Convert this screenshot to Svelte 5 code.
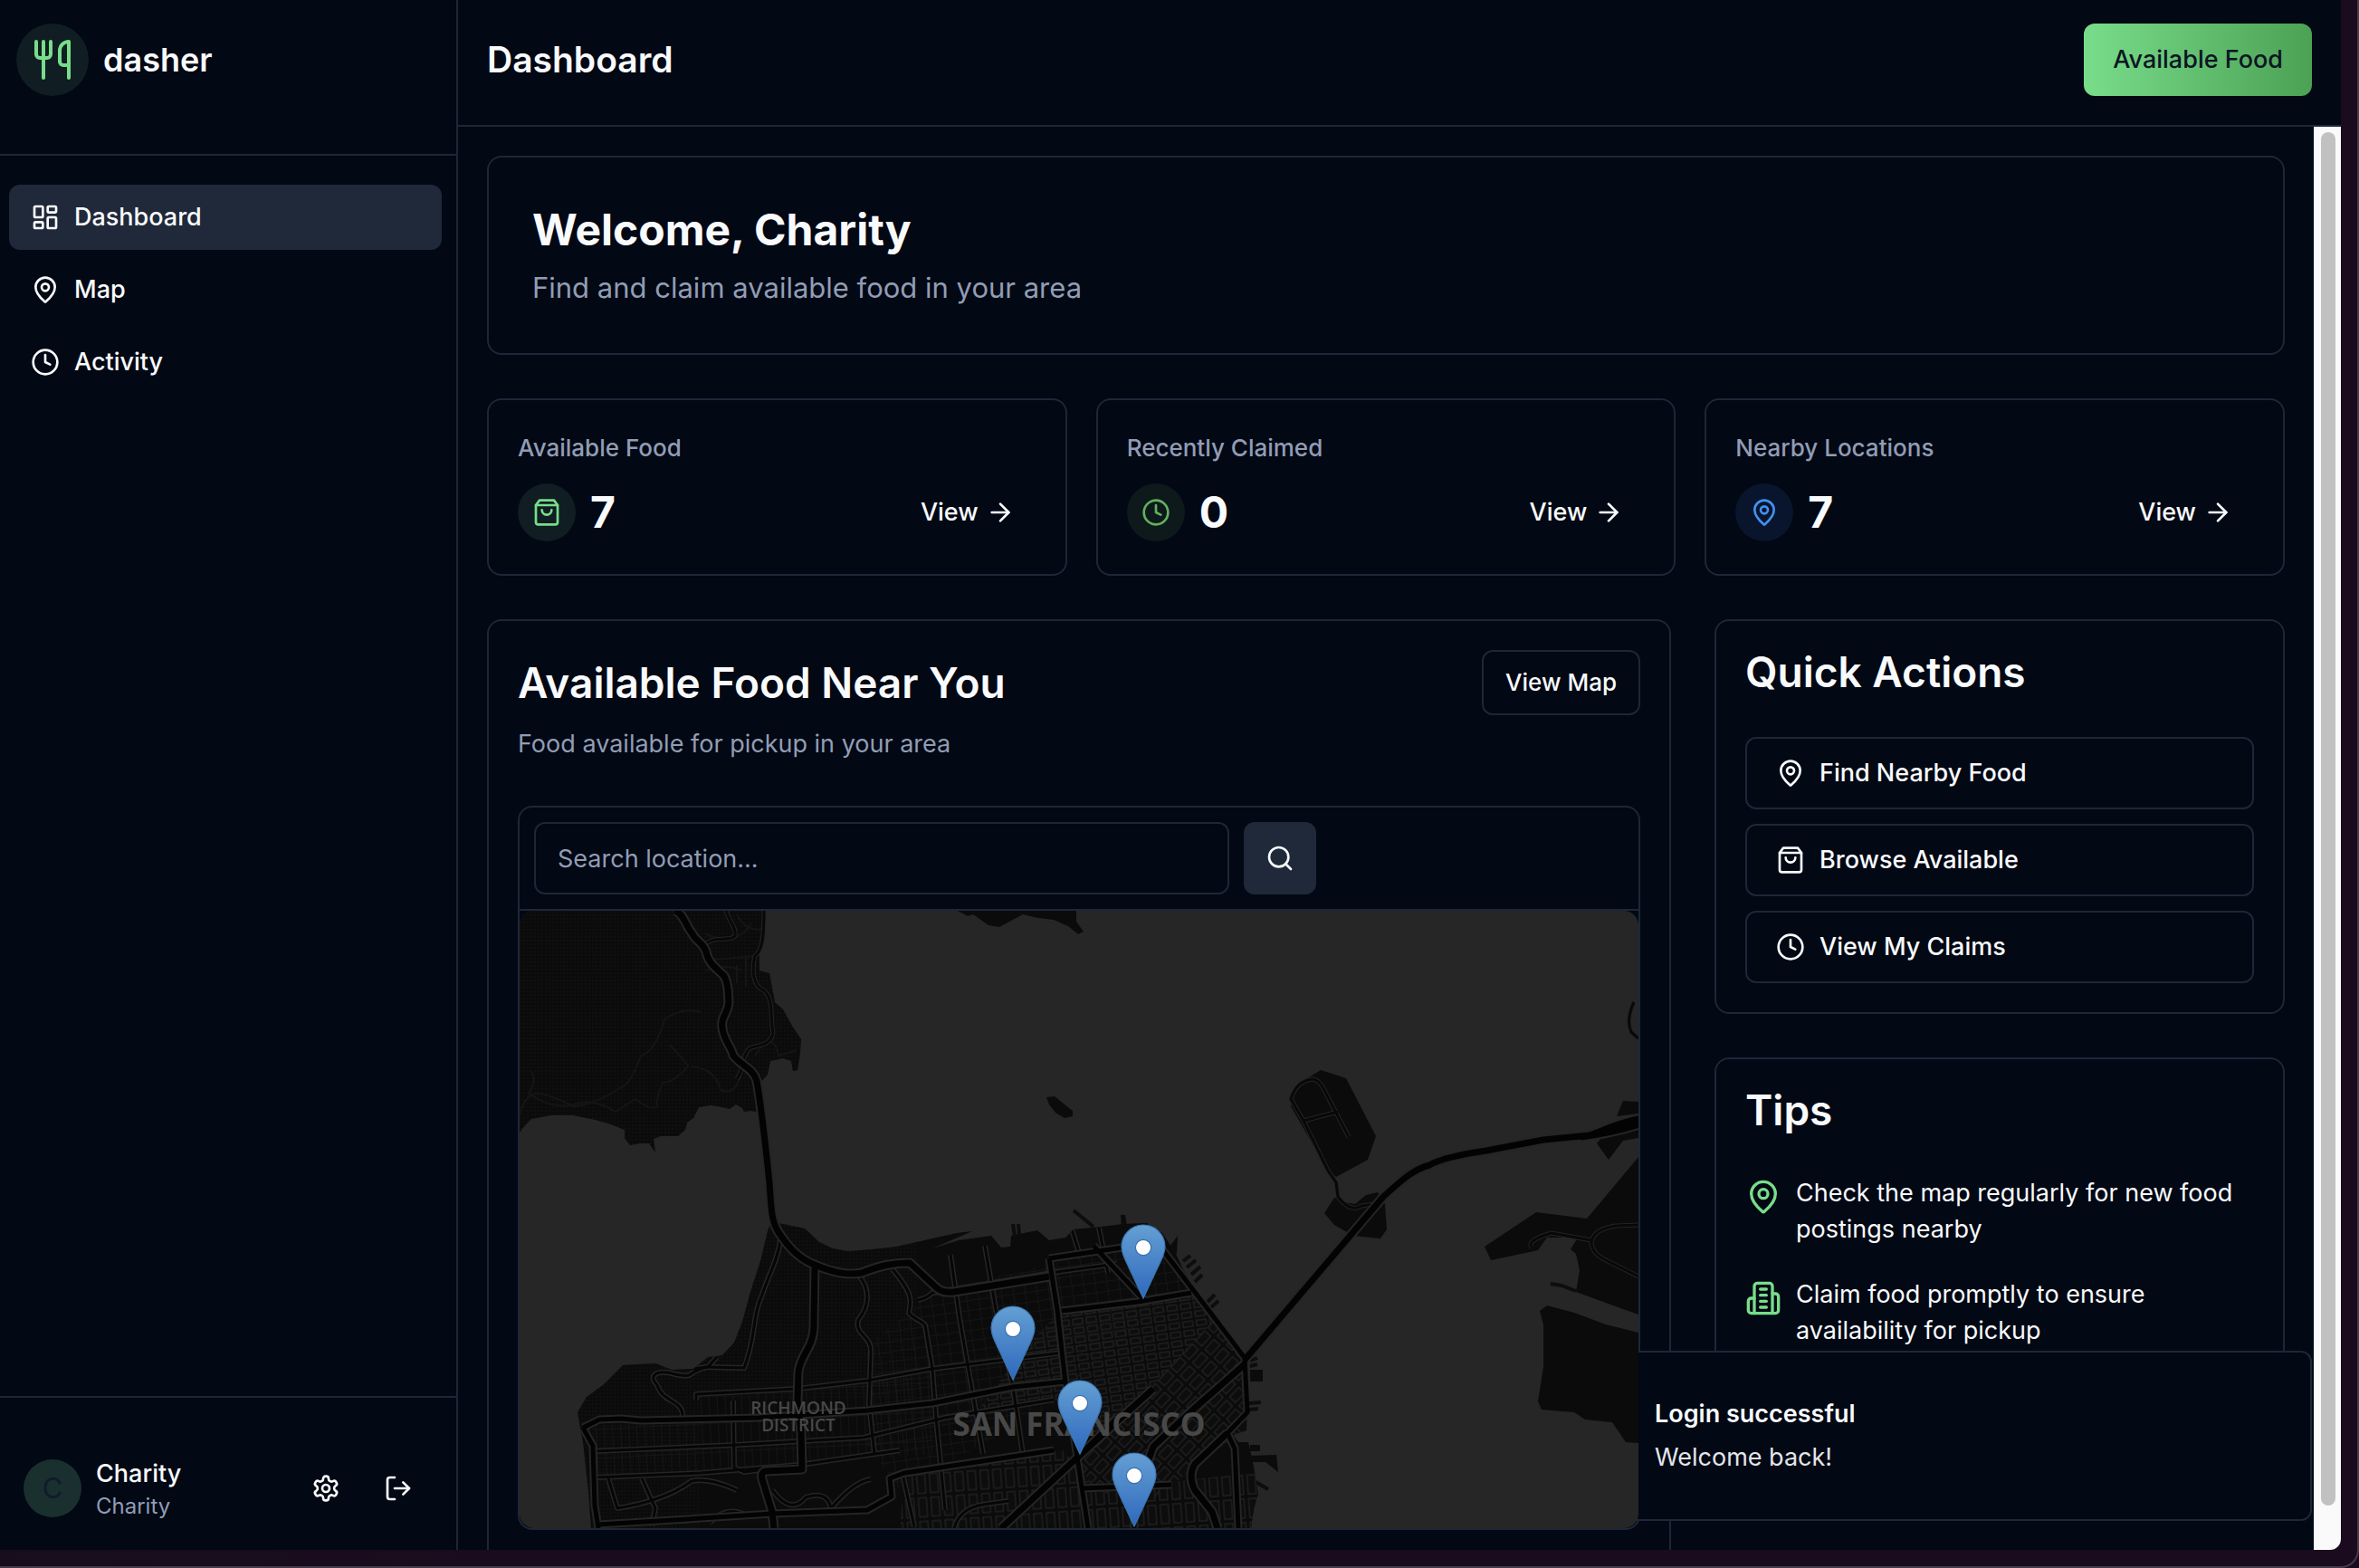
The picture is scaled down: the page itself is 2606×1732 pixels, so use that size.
<script>
  const icons = {
    utensils: ['M3 2v7c0 1.1.9 2 2 2h4a2 2 0 0 0 2-2V2', 'M7 2v20', 'M21 15V2a5 5 0 0 0-5 5v6c0 1.1.9 2 2 2h3Zm0 0v7'],
    dashboard: [
      'M4 3h5a1 1 0 0 1 1 1v7a1 1 0 0 1-1 1H4a1 1 0 0 1-1-1V4a1 1 0 0 1 1-1Z',
      'M15 3h5a1 1 0 0 1 1 1v3a1 1 0 0 1-1 1h-5a1 1 0 0 1-1-1V4a1 1 0 0 1 1-1Z',
      'M15 12h5a1 1 0 0 1 1 1v7a1 1 0 0 1-1 1h-5a1 1 0 0 1-1-1v-7a1 1 0 0 1 1-1Z',
      'M4 16h5a1 1 0 0 1 1 1v3a1 1 0 0 1-1 1H4a1 1 0 0 1-1-1v-3a1 1 0 0 1 1-1Z'
    ],
    pin: [
      'M20 10c0 4.993-5.539 10.193-7.399 11.799a1 1 0 0 1-1.202 0C9.539 20.193 4 14.993 4 10a8 8 0 0 1 16 0',
      'M9 10a3 3 0 1 0 6 0a3 3 0 1 0-6 0'
    ],
    clock: ['M2 12a10 10 0 1 0 20 0a10 10 0 1 0-20 0', 'M12 6v6l4 2'],
    bag: ['M6 2 3 6v14a2 2 0 0 0 2 2h14a2 2 0 0 0 2-2V6l-3-4Z', 'M3 6h18', 'M16 10a4 4 0 0 1-8 0'],
    arrow: ['M5 12h14', 'm12 5 7 7-7 7'],
    search: ['M3 11a8 8 0 1 0 16 0a8 8 0 1 0-16 0', 'm21 21-4.3-4.3'],
    building: [
      'M6 22V4a2 2 0 0 1 2-2h8a2 2 0 0 1 2 2v18Z',
      'M6 12H4a2 2 0 0 0-2 2v6a2 2 0 0 0 2 2h2',
      'M18 9h2a2 2 0 0 1 2 2v9a2 2 0 0 1-2 2h-2',
      'M10 6h4', 'M10 10h4', 'M10 14h4', 'M10 18h4'
    ],
    settings: [
      'M12.22 2h-.44a2 2 0 0 0-2 2v.18a2 2 0 0 1-1 1.73l-.43.25a2 2 0 0 1-2 0l-.15-.08a2 2 0 0 0-2.73.73l-.22.38a2 2 0 0 0 .73 2.73l.15.1a2 2 0 0 1 1 1.72v.51a2 2 0 0 1-1 1.74l-.15.09a2 2 0 0 0-.73 2.73l.22.38a2 2 0 0 0 2.73.73l.15-.08a2 2 0 0 1 2 0l.43.25a2 2 0 0 1 1 1.73V20a2 2 0 0 0 2 2h.44a2 2 0 0 0 2-2v-.18a2 2 0 0 1 1-1.73l.43-.25a2 2 0 0 1 2 0l.15.08a2 2 0 0 0 2.73-.73l.22-.39a2 2 0 0 0-.73-2.73l-.15-.08a2 2 0 0 1-1-1.74v-.5a2 2 0 0 1 1-1.74l.15-.09a2 2 0 0 0 .73-2.73l-.22-.38a2 2 0 0 0-2.73-.73l-.15.08a2 2 0 0 1-2 0l-.43-.25a2 2 0 0 1-1-1.73V4a2 2 0 0 0-2-2z',
      'M9 12a3 3 0 1 0 6 0a3 3 0 1 0-6 0'
    ],
    logout: ['M9 21H5a2 2 0 0 1-2-2V5a2 2 0 0 1 2-2h4', 'm16 17 5-5-5-5', 'M21 12H9']
  };

  const nav = [
    { label: 'Dashboard', icon: 'dashboard', active: true },
    { label: 'Map', icon: 'pin', active: false },
    { label: 'Activity', icon: 'clock', active: false }
  ];

  const stats = [
    { label: 'Available Food', value: 7, icon: 'bag', tone: 'mint' },
    { label: 'Recently Claimed', value: 0, icon: 'clock', tone: 'leaf' },
    { label: 'Nearby Locations', value: 7, icon: 'pin', tone: 'blue' }
  ];

  const actions = [
    { label: 'Find Nearby Food', icon: 'pin' },
    { label: 'Browse Available', icon: 'bag' },
    { label: 'View My Claims', icon: 'clock' }
  ];

  const tips = [
    { text: 'Check the map regularly for new food postings nearby', icon: 'pin' },
    { text: 'Claim food promptly to ensure availability for pickup', icon: 'building' }
  ];

  const city =
    'M79 682 76 641 70 587 67 571 64 554 74 537 92 524 105 511 114 502 130 501 150 500 168 507 192 506 208 493 224 491 237 477 246 454 255 421 266 387 274 354 278 344 291 346 315 351 331 366 346 373 362 376 390 374 416 371 456 362 483 356 500 354 456 373 485 364 521 359 532 372 542 371 543 359 572 353 585 364 603 361 612 352 643 349 666 346 690 345 710 356 725 379 740 411 761 437 786 471 801 491 804 524 803 574 788 579 794 587 805 587 811 614 816 644 811 661 808 682Z';

  const land = [
    'M0 0H272L270 30 265 47 265 66 276 69 282 101 291 109 301 127 311 142 310 157 307 176 302 177 300 166 291 163 277 166 274 181 262 194 262 222 255 221 248 222 246 218 239 214 232 219 219 216 211 215 198 217 192 229 185 234 183 242 175 249 156 249 148 252 150 267 143 257 133 257 122 259 116 251 116 242 101 236 84 231 59 226 34 226 13 230 6 237 0 245Z',
    'M484 0 495 6 501 4 518 16 530 18 543 11 556 4 573 8 590 10 606 17 617 26 623 23 615 12 615 0Z',
    'M582 206 591 205 602 214 611 221 611 227 602 229 592 223 585 214Z',
    city,
    'M885 176 913 185 946 249 937 275 902 294 893 287 852 216 860 191Z',
    'M900 317 889 334 900 347 921 359 951 362 958 352 956 324 948 311 935 314 923 324 912 322Z',
    'M1219 210 1236 211V224L1212 227Z',
    'M1190 257 1203 275 1219 254 1236 251V232L1200 245Z',
    'M1236 272 1179 340 1123 333 1066 371 1073 386 1125 375 1135 361 1169 361 1161 374 1167 379 1171 397 1167 421 1236 446Z',
    'M1135 436 1165 444 1200 457 1236 466V588L1222 587 1207 565 1177 562 1165 554 1129 551 1125 542 1131 504 1131 457 1127 442Z',
    'M807 507h14v13h-14Z',
    'M807 590h11v7h-11Z',
    'M807 602 836 601 838 620 824 609 807 609Z',
    'M727 359 726 379 716 374Z',
    'M664 336l5 0 2 14h-6Z'
  ];

  const piers = [
    'M612 331 634 349', 'M692 345v8', 'M545 346l2 14', 'M551 346l1 12', 'M733 387l8-6', 'M737 394l10-8', 'M742 402l10-9',
    'M746 410l8-8', 'M760 432l8-8', 'M764 438l8-7', 'M807 497l8-3', 'M807 503l8-2', 'M806 544l13-1', 'M806 551l10-1',
    'M813 631l14 8', 'M1139 412l12 2 16 6'
  ];

  const highways = [
    'M172 0C182 4 184 18 190 24C196 36 202 34 206 45C208 58 218 64 226 72C232 84 230 94 231 101C230 115 222 116 224 130C226 144 234 150 236 160C246 172 258 174 262 188C266 210 272 262 276 300C278 330 278 345 288 358C300 376 312 386 326 391C352 402 366 402 378 400C398 392 412 389 431 389L458 414Q466 423 480 421L585 404',
    'M326 391 325 460C325 482 309 492 308 510L307 541 311 576 312 617 272 619Q266 620 268 628L279 664 281 682',
    'M801 496 954 316C972 300 986 286 1005 281Q1020 272 1068 265L1131 253 1182 248C1198 243 1212 234 1240 229',
    'M1172 250Q1206 246 1240 235',
    'M801 501 744 551 700 592 690 620',
    'M782 577 746 611Q738 624 746 640L765 664 771 682',
    'M532 682 616 604 700 528'
  ];

  const avenues = [
    'M70 571 88 562 112 561 134 563 264 560 384 552 456 544 545 526 603 520',
    'M70 571 81 591 83 657 87 682',
    'M87 678 170 673 279 666 384 662 411 647 409 627 425 621 590 596',
    'M585 384 594 441 603 521 616 604 628 682',
    'M585 384 666 372 710 374 748 424 786 474 801 494 804 554 782 577 790 594 794 682',
    'M599 442 683 432 742 422',
    'M634 370 690 430', 'M679 682V630', 'M620 638 720 634', 'M616 604 660 560'
  ];

  const streets = [
    'M190 506 208 504 218 493', 'M236 541 237 615 248 620 264 618', 'M195 540V534L307 528 384 519 456 506 600 488',
    'M82 597 240 590 380 582 470 560 590 540', 'M83 626 200 621 310 612 420 596',
    'M206 504C180 512 196 516 172 512C150 506 142 514 152 524C158 544 182 540 180 560', 'M206 504 248 505C262 470 256 450 268 424C276 400 286 384 288 364',
    'M374 402C390 420 384 440 374 452C370 470 390 468 388 490L386 544 392 600', 'M412 396C432 420 434 428 430 444C436 452 444 452 448 458L456 506 460 560 470 662',
    'M476 380 486 450 500 530 512 600', 'M514 370 526 440 545 526 556 600', 'M440 430Q450 428 456 422L600 398 660 390',
    'M98 627 108 660Q160 652 190 630 210 626 240 640', 'M135 627 150 660 146 680', 'M210 676Q230 656 250 668',
    'M279 640Q300 668 316 648 340 640 344 660', 'M344 660Q370 630 388 628', 'M480 682Q486 660 512 656L540 652',
    'M423 622 436 680', 'M610 352 620 384', 'M640 350 650 400'
  ];

  const trails = [
    'M200 44C210 24 230 36 238 28 240 20 232 12 228 0', 'M270 0C270 30 268 44 260 50 256 66 258 84 270 88 282 100 276 116 280 134 278 150 262 148 254 152 244 162 250 172 240 186',
    'M893 287 866 232 852 208Q858 188 876 186 884 186 892 204L916 250', 'M866 232 904 222', 'M893 287 902 300 904 316Q918 334 930 326L944 324',
    'M1118 372Q1112 364 1140 356L1184 364', 'M1236 347 1211 348Q1186 352 1184 366 1184 378 1200 386L1236 404',
    'M1231 101Q1222 120 1228 134L1236 141'
  ];

  const contours = [
    'M0 226Q6 200 24 202 40 206 60 216 84 214 110 196 122 194 134 160 150 156 160 120 180 106 200 112 222 126',
    'M166 148Q186 170 186 172 170 190 158 190 150 210 152 216 146 222 128 208 118 214 106 222 80 206 60 214 36 220 10 202 20 186 12 176',
    'M190 172Q216 174 222 198 240 206 246 174',
    'M206 66Q228 58 246 66', 'M214 54 262 50', 'M206 26Q240 40 256 14', 'M240 80V60', 'M250 84V50', 'M260 160Q280 130 286 160 300 156 306 154', 'M240 4Q250 24 268 20'
  ];

  const pins = [
    { x: 689, y: 428 },
    { x: 545, y: 518 },
    { x: 619, y: 600 },
    { x: 679, y: 680 }
  ];
</script>

{#snippet icon(name, size = 'md')}
  <svg class="icon {size}" viewBox="0 0 24 24" aria-hidden="true">
    {#each icons[name] as d}<path {d} />{/each}
  </svg>
{/snippet}

<div class="desktop">
  <div class="window">
    <aside class="sidebar">
      <div class="brand">
        <span class="logo">{@render icon('utensils', 'xl')}</span>
        <span class="brand-name">dasher</span>
      </div>
      <nav>
        {#each nav as item}
          <a href="#{item.label.toLowerCase()}" class:active={item.active} aria-current={item.active ? 'page' : undefined}>
            {@render icon(item.icon)}
            {item.label}
          </a>
        {/each}
      </nav>
      <div class="account">
        <span class="avatar">C</span>
        <div class="who">
          <span class="name">Charity</span>
          <span class="role">Charity</span>
        </div>
        <button class="ghost" aria-label="Settings">{@render icon('settings')}</button>
        <button class="ghost" aria-label="Log out">{@render icon('logout')}</button>
      </div>
    </aside>

    <div class="page">
      <header>
        <h1>Dashboard</h1>
        <button class="primary">Available Food</button>
      </header>

      <div class="viewport">
        <main>
          <section class="card welcome">
            <h2>Welcome, Charity</h2>
            <p>Find and claim available food in your area</p>
          </section>

          <section class="stats">
            {#each stats as stat}
              <article class="card stat">
                <h3>{stat.label}</h3>
                <div class="stat-row">
                  <span class="badge {stat.tone}">{@render icon(stat.icon)}</span>
                  <strong>{stat.value}</strong>
                  <button class="view">View {@render icon('arrow')}</button>
                </div>
              </article>
            {/each}
          </section>

          <section class="columns">
            <article class="card nearby">
              <div class="title-row">
                <h2>Available Food Near You</h2>
                <button class="outline">View Map</button>
              </div>
              <p>Food available for pickup in your area</p>
              <div class="map-box">
                <form class="search" onsubmit={(e) => e.preventDefault()}>
                  <input type="text" placeholder="Search location..." aria-label="Search location" />
                  <button aria-label="Search">{@render icon('search')}</button>
                </form>
                <div class="map">
                  <svg viewBox="0 0 1236 682" preserveAspectRatio="xMidYMid slice" role="img" aria-label="Map of San Francisco">
                    <defs>
                      <linearGradient id="pin-fill" x1="0" y1="0" x2="0" y2="1">
                        <stop offset="0" stop-color="#649fd3" />
                        <stop offset="1" stop-color="#2e68bd" />
                      </linearGradient>
                      <clipPath id="city-clip"><path d={city} /></clipPath>
                      <clipPath id="headland-clip"><path d={land[0]} /></clipPath>
                      <pattern id="blocks-west" width="9" height="32" patternUnits="userSpaceOnUse" patternTransform="rotate(-3)">
                        <path class="block" d="M0 0V32M0 0H9" />
                      </pattern>
                      <pattern id="blocks-north" width="13" height="11" patternUnits="userSpaceOnUse" patternTransform="rotate(-8)">
                        <path class="block" d="M0 0V11M0 0H13" />
                      </pattern>
                      <pattern id="blocks-core" width="15" height="10" patternUnits="userSpaceOnUse" patternTransform="rotate(-8)">
                        <rect class="core" x="2" y="2" width="11" height="6" />
                      </pattern>
                      <pattern id="blocks-soma" width="20" height="14" patternUnits="userSpaceOnUse" patternTransform="rotate(-47)">
                        <rect class="core" x="2" y="2" width="15" height="9" />
                      </pattern>
                      <pattern id="blocks-south" width="14" height="26" patternUnits="userSpaceOnUse" patternTransform="rotate(-4)">
                        <rect class="core" x="2" y="2" width="9" height="21" />
                      </pattern>
                      <pattern id="grain" width="4" height="4" patternUnits="userSpaceOnUse">
                        <circle cx="1" cy="1" r="1" fill="#111" />
                      </pattern>
                    </defs>

                    {#each land as d}<path class="land" {d} />{/each}
                    <path d={land[0]} fill="url(#grain)" />
                    <g clip-path="url(#headland-clip)">
                      {#each contours as d}<path class="contour" {d} />{/each}
                    </g>
                    {#each piers as d}<path class="pier" {d} />{/each}

                    <g clip-path="url(#city-clip)">
                      <path fill="url(#grain)" d="M60 682V340H440V540H200V682Z" />
                      <path fill="url(#blocks-west)" d="M195 536 384 520 456 506 456 600 83 628 82 570 195 560Z" />
                      <path fill="url(#blocks-north)" d="M384 480 460 420 590 390 700 370 760 430 690 450 600 540 420 640 384 590Z" />
                      <path fill="url(#blocks-core)" d="M560 480 600 440 740 420 770 450 640 590 600 540 500 560Z" />
                      <path fill="url(#blocks-soma)" d="M770 448 804 500 804 570 700 650 620 640 620 604Z" />
                      <path fill="url(#blocks-south)" d="M425 622 600 596 640 640 816 620 816 682 420 682Z" />
                    </g>

                    {#each trails as d}<path class="casing thin" {d} />{/each}
                    {#each trails as d}<path class="road thin" {d} />{/each}
                    <g clip-path="url(#city-clip)">
                      {#each streets as d}<path class="casing street" {d} />{/each}
                      {#each streets as d}<path class="road street" {d} />{/each}
                      {#each avenues as d}<path class="casing avenue" {d} />{/each}
                    </g>
                    {#each highways as d}<path class="casing highway" {d} />{/each}
                    {#each avenues as d}<path class="road avenue" {d} />{/each}
                    {#each highways as d}<path class="road highway" {d} />{/each}

                    <text class="district"><tspan x="308" y="556">RICHMOND</tspan><tspan x="308" y="575">DISTRICT</tspan></text>
                    <text class="city-name" x="618" y="580">SAN FRANCISCO</text>

                    {#each pins as pin}
                      <g transform="translate({pin.x - 25} {pin.y - 82}) scale(2)">
                        <path
                          d="M12.5.5C5.9.5.5 5.9.5 12.5c0 3 1 5.2 2.4 8.1L12.5 41l9.6-20.4c1.4-2.9 2.4-5.1 2.4-8.1C24.5 5.9 19.1.5 12.5.5Z"
                          fill="url(#pin-fill)"
                          stroke="#3a76b4"
                          stroke-width="0.6"
                        />
                        <circle cx="12.5" cy="13" r="4.3" fill="#fff" stroke="#3a70ae" stroke-width="0.6" />
                      </g>
                    {/each}
                  </svg>
                </div>
              </div>
            </article>

            <div class="side">
              <article class="card">
                <h2>Quick Actions</h2>
                <div class="actions">
                  {#each actions as action}
                    <button>{@render icon(action.icon)} {action.label}</button>
                  {/each}
                </div>
              </article>

              <article class="card">
                <h2>Tips</h2>
                <ul>
                  {#each tips as tip}
                    <li>{@render icon(tip.icon, 'lg')} <span>{tip.text}</span></li>
                  {/each}
                </ul>
              </article>
            </div>
          </section>
        </main>
        <div class="track"><div class="thumb"></div></div>
      </div>
    </div>

    <div class="toast" role="status">
      <strong>Login successful</strong>
      <span>Welcome back!</span>
    </div>
  </div>
</div>

<style>
  :global(body) {
    background: #1b0b1e;
  }

  .desktop,
  .desktop * {
    box-sizing: border-box;
  }

  .desktop {
    --bg: #020814;
    --line: #1e2738;
    --text: #f8fafc;
    --muted: #919db4;
    --mint: #78dd8a;
    height: 100vh;
    padding: 0 18px 18px 0;
    background: linear-gradient(90deg, #170e1d, #1b0b1e 20%);
    border-right: 2px solid #453c4a;
    border-bottom: 2px solid #453c4a;
    border-bottom-right-radius: 20px;
    overflow: hidden;
    font-family: Inter, "Liberation Sans", sans-serif;
    font-size: 27px;
    line-height: 40px;
    color: var(--text);
  }

  h1, h2, h3, p, ul {
    margin: 0;
    padding: 0;
  }

  button, input {
    font: inherit;
    color: inherit;
    background: none;
    border: 0;
    margin: 0;
    padding: 0;
  }

  button {
    display: flex;
    align-items: center;
    font-weight: 500;
    cursor: pointer;
  }

  .icon {
    flex: none;
    fill: none;
    stroke: currentColor;
    stroke-width: 2;
    stroke-linecap: round;
    stroke-linejoin: round;
  }

  .icon.md { width: 32px; height: 32px; }
  .icon.lg { width: 40px; height: 40px; }
  .icon.xl { width: 48px; height: 48px; }

  .window {
    position: relative;
    display: flex;
    height: 100%;
    background: var(--bg);
    border-bottom-right-radius: 12px;
    overflow: hidden;
  }

  /* Sidebar */
  .sidebar {
    flex: none;
    display: flex;
    flex-direction: column;
    width: 506px;
    border-right: 2px solid var(--line);
  }

  .brand {
    display: flex;
    align-items: center;
    gap: 16px;
    padding: 26px 18px 64px;
    border-bottom: 2px solid var(--line);
  }

  .logo {
    display: grid;
    place-items: center;
    width: 80px;
    height: 80px;
    border-radius: 50%;
    background: #101d22;
    color: var(--mint);
  }

  .brand-name {
    font-size: 36px;
    font-weight: 600;
  }

  nav {
    flex: 1;
    display: flex;
    flex-direction: column;
    gap: 8px;
    padding: 32px 16px 32px 10px;
  }

  nav a {
    display: flex;
    align-items: center;
    gap: 16px;
    height: 72px;
    padding: 0 24px;
    border-radius: 12px;
    color: var(--text);
    font-weight: 500;
    text-decoration: none;
  }

  nav a.active {
    background: #202939;
  }

  .account {
    display: flex;
    align-items: center;
    padding: 60px 24px 28px 26px;
    border-top: 2px solid var(--line);
  }

  .avatar {
    display: grid;
    place-items: center;
    width: 64px;
    height: 64px;
    margin-right: 16px;
    border-radius: 50%;
    background: #1a302e;
    color: #111a2c;
    font-size: 31px;
  }

  .who {
    flex: 1;
    display: flex;
    flex-direction: column;
  }

  .name {
    font-weight: 500;
  }

  .role {
    font-size: 24px;
    line-height: 32px;
    color: var(--muted);
  }

  .ghost {
    justify-content: center;
    width: 80px;
    height: 80px;
  }

  /* Header */
  .page {
    flex: 1;
    min-width: 0;
    display: flex;
    flex-direction: column;
  }

  header {
    display: flex;
    align-items: center;
    justify-content: space-between;
    padding: 26px 32px 32px;
    border-bottom: 2px solid var(--line);
  }

  h1 {
    font-size: 39px;
    line-height: 56px;
    font-weight: 600;
  }

  .primary {
    height: 80px;
    padding: 0 32px;
    border-radius: 12px;
    background: linear-gradient(90deg, #78dd8a, #4ca154);
    color: #0c1524;
  }

  /* Scrolling area */
  .viewport {
    flex: 1;
    min-height: 0;
    display: flex;
    overflow: hidden;
  }

  main {
    flex: 1;
    min-width: 0;
    display: flex;
    flex-direction: column;
    gap: 48px;
    padding: 32px;
  }

  .track {
    flex: none;
    width: 30px;
    padding: 6px 6px 49px 8px;
    background: #fafafa;
  }

  .thumb {
    width: 16px;
    height: 100%;
    border-radius: 8px;
    background: #c1c1c1;
  }

  .card {
    padding: 32px;
    border: 2px solid var(--line);
    border-radius: 16px;
  }

  h2 {
    font-size: 46px;
    line-height: 48px;
    font-weight: 600;
  }

  .welcome {
    padding: 48px;
  }

  .welcome h2 {
    font-size: 48px;
    line-height: 64px;
    font-weight: 700;
  }

  .welcome p {
    font-size: 31px;
    line-height: 48px;
    padding-top: 8px;
    color: var(--muted);
  }

  .stats {
    display: grid;
    grid-template-columns: repeat(3, 1fr);
    gap: 32px;
  }

  .stat h3 {
    font-size: 26px;
    line-height: 42px;
    font-weight: 500;
    color: var(--muted);
  }

  .stat-row {
    display: flex;
    align-items: center;
    gap: 16px;
    height: 72px;
    margin-top: 14px;
  }

  .badge {
    display: grid;
    place-items: center;
    width: 64px;
    height: 64px;
    border-radius: 50%;
  }

  .mint { background: #101d22; color: var(--mint); }
  .leaf { background: #0e191c; color: #60b15c; }
  .blue { background: #08152c; color: #4391f0; }

  .stat-row strong {
    flex: 1;
    font-size: 48px;
    font-weight: 700;
  }

  .view {
    gap: 8px;
    height: 72px;
    padding: 0 24px;
  }

  .columns {
    display: grid;
    grid-template-columns: repeat(3, 1fr);
    gap: 48px;
  }

  .nearby {
    grid-column: span 2;
    padding-bottom: 96px;
  }

  .title-row {
    display: flex;
    align-items: center;
    justify-content: space-between;
  }

  .outline {
    height: 72px;
    padding: 0 24px;
    border: 2px solid var(--line);
    border-radius: 12px;
    font-size: 26px;
  }

  .nearby p {
    padding: 12px 0 48px;
    color: var(--muted);
  }

  .map-box {
    border: 2px solid var(--line);
    border-radius: 16px;
  }

  .search {
    display: flex;
    gap: 16px;
    padding: 16px;
    border-bottom: 2px solid var(--line);
  }

  .search input {
    width: 768px;
    height: 80px;
    padding: 0 24px;
    border: 2px solid var(--line);
    border-radius: 12px;
  }

  .search input::placeholder {
    color: var(--muted);
    opacity: 1;
  }

  .search button {
    justify-content: center;
    width: 80px;
    height: 80px;
    border-radius: 12px;
    background: #202939;
  }

  /* The map stacks above the toast */
  .map {
    position: relative;
    z-index: 2;
    height: 682px;
    border-radius: 16px;
    overflow: hidden;
    background: #262626;
  }

  .map svg {
    display: block;
    width: 100%;
    height: 100%;
  }

  .land { fill: #0b0b0b; }
  .pier { fill: none; stroke: #0d0d0d; stroke-width: 4; }
  .contour { fill: none; stroke: #151515; stroke-width: 2; }
  .block { fill: none; stroke: #1d1d1d; stroke-width: 1; }
  .core { fill: #0d0d0d; stroke: #282828; stroke-width: 1; }
  .casing, .road { fill: none; stroke-linejoin: round; }
  .casing { stroke: #252525; }
  .road { stroke: #030303; }
  .casing.thin { stroke: #242424; stroke-width: 5; }
  .road.thin { stroke: #080808; stroke-width: 3; }
  .casing.street { stroke-width: 6; }
  .road.street { stroke: #060606; stroke-width: 3; }
  .casing.avenue { stroke-width: 9; }
  .road.avenue { stroke-width: 5; }
  .casing.highway { stroke-width: 11; }
  .road.highway { stroke-width: 7; }

  .district, .city-name {
    fill: #484848;
    font-family: "Open Sans", sans-serif;
    text-anchor: middle;
  }

  .district { font-size: 19px; font-weight: 600; }
  .city-name { font-size: 35px; font-weight: 700; }

  .side {
    display: flex;
    flex-direction: column;
    gap: 48px;
  }

  .actions {
    display: flex;
    flex-direction: column;
    gap: 16px;
    padding-top: 48px;
  }

  .actions button {
    gap: 16px;
    height: 80px;
    padding: 0 32px;
    border: 2px solid var(--line);
    border-radius: 12px;
  }

  ul {
    display: flex;
    flex-direction: column;
    gap: 32px;
    padding-top: 48px;
    list-style: none;
  }

  li {
    display: flex;
    gap: 16px;
  }

  li .icon {
    margin-top: 4px;
    color: var(--mint);
  }

  .toast {
    position: absolute;
    right: 32px;
    bottom: 32px;
    z-index: 1;
    display: flex;
    flex-direction: column;
    gap: 8px;
    width: 776px;
    padding: 48px;
    border: 2px solid var(--line);
    border-radius: 12px;
    background: var(--bg);
  }

  .toast strong { font-weight: 600; }
  .toast span { color: #e2e5e9; }
</style>
